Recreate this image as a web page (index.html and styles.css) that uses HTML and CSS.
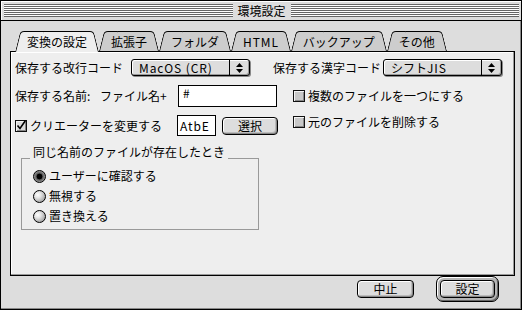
FILE: index.html
```html
<!DOCTYPE html>
<html lang="ja">
<head>
<meta charset="utf-8">
<title>環境設定</title>
<link rel="stylesheet" href="styles.css">
</head>
<body>
<div class="window">
  <div class="titlebar">
    <div class="stripes stripes-left"></div>
    <div class="title">環境設定</div>
    <div class="stripes stripes-right"></div>
  </div>
  <div class="frame">
    <div class="tabs">
      <div class="tab active">変換の設定</div>
      <div class="tab">拡張子</div>
      <div class="tab">フォルダ</div>
      <div class="tab latin">HTML</div>
      <div class="tab">バックアップ</div>
      <div class="tab">その他</div>
    </div>
    <div class="panel">
      <div class="row row1">
        <span class="label lbl-eol">保存する改行コード</span>
        <div class="popup">
          <span class="popup-text latin">MacOS (CR)</span>
          <span class="popup-arrow"><svg width="7" height="10" viewBox="0 0 7 10"><polygon points="0,4 3.5,0 7,4" fill="#000"/><polygon points="0,6 3.5,10 7,6" fill="#000"/></svg></span>
        </div>
        <span class="label lbl-kanji">保存する漢字コード</span>
        <div class="popup">
          <span class="popup-text">シフト<span class="latin">JIS</span></span>
          <span class="popup-arrow"><svg width="7" height="10" viewBox="0 0 7 10"><polygon points="0,4 3.5,0 7,4" fill="#000"/><polygon points="0,6 3.5,10 7,6" fill="#000"/></svg></span>
        </div>
      </div>
      <div class="row row2">
        <div class="left">
          <span class="label lbl-name">保存する名前:</span>
          <span class="label lbl-file">ファイル名+</span>
          <div class="field field-name">#</div>
        </div>
        <div class="check">
          <span class="box"></span><span>複数のファイルを一つにする</span>
        </div>
      </div>
      <div class="row row3">
        <div class="left">
          <div class="check creator">
            <span class="box checked"><svg width="13" height="13" viewBox="0 0 13 13"><path d="M2.5 6.5 L5 9.5 L10.5 1.5" stroke="#000" stroke-width="1.6" fill="none"/></svg></span><span>クリエーターを変更する</span>
          </div>
          <div class="field field-creator latin">AtbE</div>
          <div class="btn btn-select">選択</div>
        </div>
        <div class="check check-delete">
          <span class="box"></span><span>元のファイルを削除する</span>
        </div>
      </div>
      <div class="group">
        <div class="group-head">
          <span class="stub stub-left"></span>
          <span class="group-title">同じ名前のファイルが存在したとき</span>
          <span class="stub stub-right"></span>
        </div>
        <div class="group-body">
          <div class="radio-row"><span class="radio on"></span><span>ユーザーに確認する</span></div>
          <div class="radio-row"><span class="radio"></span><span>無視する</span></div>
          <div class="radio-row"><span class="radio"></span><span>置き換える</span></div>
        </div>
      </div>
    </div>
    <div class="buttons">
      <div class="btn btn-cancel">中止</div>
      <div class="default-ring"><div class="btn btn-ok">設定</div></div>
    </div>
  </div>
</div>
</body>
</html>
```
FILE: styles.css
```css
html, body {
  margin: 0;
  padding: 0;
  background: #fff;
}
body {
  font-family: "Noto Sans CJK JP", "Noto Sans", sans-serif;
  font-size: 12px;
  color: #000;
  line-height: 14px;
}
.latin {
  letter-spacing: 0.9px;
}
.window {
  width: 522px;
  height: 310px;
  box-sizing: border-box;
  border: 1px solid #000;
  background: #ddd;
  box-shadow: inset -1px -1px 0 #888;
}
.titlebar {
  height: 19px;
  border-bottom: 1px solid #000;
  display: flex;
  align-items: center;
  background: #ddd;
  box-shadow: inset 1px 1px 0 #fff;
}
.stripes {
  flex: 1;
  height: 13px;
  background: repeating-linear-gradient(to bottom, #666 0 1px, #fff 1px 2px);
}
.stripes-left { margin-left: 3px; }
.stripes-right { margin-right: 2px; }
.title {
  padding: 0 5px;
  line-height: 19px;
}
.frame {
  padding: 10px 0 0 9px;
}
.tabs {
  display: flex;
  height: 20px;
  padding-left: 5px;
  position: relative;
  z-index: 2;
}
.tab {
  position: relative;
  z-index: 0;
  height: 20px;
  line-height: 21px;
  padding: 0 12px;
}
.tab::before,
.tab::after {
  content: "";
  position: absolute;
  top: 0;
  bottom: 0;
  width: 60%;
  background: #cdcdcd;
  border-top: 1px solid #000;
  z-index: -1;
}
.tab::before {
  left: 0;
  border-left: 1px solid #000;
  border-top-left-radius: 4px;
  transform: skewX(-14deg);
  transform-origin: bottom left;
}
.tab::after {
  right: 0;
  border-right: 1px solid #000;
  border-top-right-radius: 4px;
  transform: skewX(14deg);
  transform-origin: bottom right;
}
.tab.active { z-index: 1; }
.tab.active::before,
.tab.active::after {
  background: #eee;
  bottom: -1px;
}
.panel {
  width: 505px;
  height: 225px;
  box-sizing: border-box;
  border: 1px solid #000;
  background: #eee;
  box-shadow: inset -1px -1px 0 #999, inset 1px 1px 0 #fff;
  padding: 6px 0 0 4px;
}
.row {
  display: flex;
  align-items: center;
}
.row1 { height: 19px; }
.row2 { height: 22px; margin-top: 8px; }
.row3 { height: 21px; margin-top: 8px; }
.label { white-space: nowrap; }
.lbl-eol { width: 116px; }
.lbl-kanji { width: 110px; margin-left: 23px; }
.popup {
  width: 119px;
  height: 17px;
  box-sizing: border-box;
  border: 1px solid #000;
  border-radius: 3px;
  background: #ddd;
  box-shadow: inset 1px 1px 0 #fff, inset -1px -1px 0 #999, 1px 1px 0 #888;
  display: flex;
  align-items: center;
}
.popup-text {
  flex: 1;
  padding-left: 7px;
  line-height: 15px;
  white-space: nowrap;
}
.popup-arrow {
  width: 19px;
  height: 15px;
  border-left: 1px solid #000;
  display: flex;
  align-items: center;
  justify-content: center;
}
.left {
  width: 278px;
  display: flex;
  align-items: center;
  height: 100%;
}
.lbl-name { width: 85px; }
.lbl-file { width: 78px; }
.field {
  box-sizing: border-box;
  border: 1px solid #000;
  background: #fff;
  white-space: nowrap;
}
.field-name {
  width: 99px;
  height: 22px;
  padding: 1px 0 0 4px;
  line-height: 12px;
}
.field-creator {
  width: 39px;
  height: 21px;
  padding-left: 2px;
  line-height: 19px;
}
.check {
  display: flex;
  align-items: center;
  white-space: nowrap;
}
.creator { width: 162px; }
.check-delete { align-self: flex-start; margin-top: 0; }
.box {
  width: 12px;
  height: 12px;
  box-sizing: border-box;
  border: 1px solid #111;
  background: #c8c8c8;
  box-shadow: inset 1px 1px 0 #f4f4f4, inset -1px -1px 0 #888;
  margin-right: 3px;
  position: relative;
  flex: none;
}
.box.checked {
  background: #ddd;
}
.box svg {
  position: absolute;
  left: -1px;
  top: -2px;
}
.btn {
  box-sizing: border-box;
  height: 18px;
  border: 1px solid #000;
  border-radius: 4px;
  background: #ddd;
  box-shadow: inset 1px 1px 0 #fff, inset -1px -1px 0 #888, inset -2px -2px 0 #bbb;
  text-align: center;
  line-height: 16px;
}
.btn-select {
  width: 56px;
  margin-left: 6px;
}
.group {
  width: 238px;
  margin: 8px 0 0 6px;
}
.group-head {
  display: flex;
  align-items: flex-end;
  height: 15px;
}
.stub {
  height: 0;
  border-bottom: 1px solid #999;
}
.stub-left { width: 9px; }
.stub-right { flex: 1; }
.group-title {
  padding: 0 3px;
  line-height: 14px;
  white-space: nowrap;
}
.group-body {
  border: 1px solid #999;
  border-top: none;
  padding: 7px 0 3px 11px;
}
.radio-row {
  height: 20px;
  display: flex;
  align-items: center;
}
.radio {
  width: 13px;
  height: 13px;
  box-sizing: border-box;
  border: 1px solid #000;
  border-radius: 50%;
  background: radial-gradient(circle at 35% 35%, #fff 0, #e4e4e4 30%, #999 85%);
  margin-right: 3px;
  flex: none;
}
.radio.on {
  background: radial-gradient(circle at 50% 50%, #000 0 2.6px, #555 3.2px, #888 5px, #bbb 7px);
}
.buttons {
  width: 505px;
  height: 26px;
  display: flex;
  justify-content: flex-end;
  align-items: center;
}
.btn-cancel {
  width: 57px;
  margin-right: 22px;
}
.default-ring {
  width: 63px;
  height: 26px;
  box-sizing: border-box;
  border: 1px solid #000;
  border-radius: 7px;
  padding: 3px;
  background: #b4b4b4;
  box-shadow: inset 1px 1px 0 #fff, inset -1px -1px 0 #666;
  margin-right: 16px;
}
.btn-ok {
  width: 100%;
}
```
